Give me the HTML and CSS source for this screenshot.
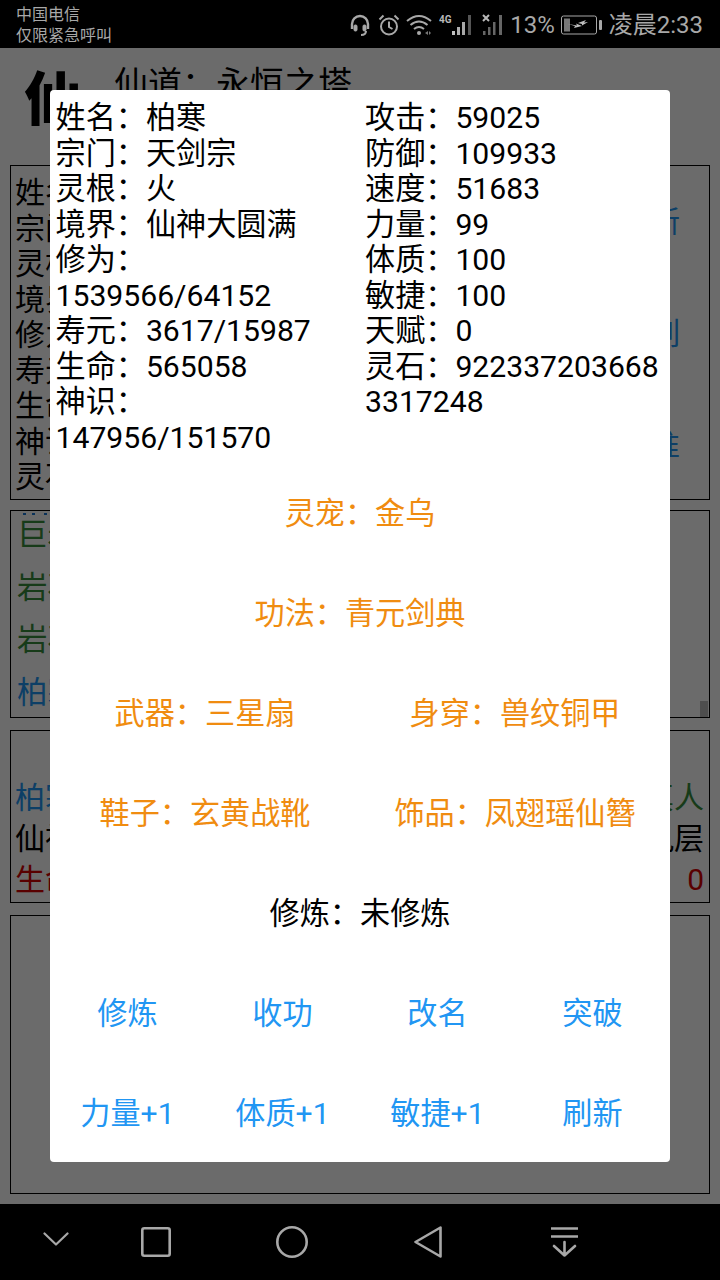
FILE: index.html
```html
<!DOCTYPE html>
<html lang="zh-CN">
<head>
<meta charset="utf-8">
<title>仙道：永恒之塔</title>
<link rel="stylesheet" href="styles.css">
</head>
<body>
<div class="phone">
  <header class="status">
    <div class="carrier"><div>中国电信</div><div>仅限紧急呼叫</div></div>
    <div class="status-right">
      <svg class="i-head" width="20" height="22" viewBox="0 0 20 22" fill="none" stroke="#a8a8a8" stroke-width="2.4"><path d="M2 15V10a8 8 0 0 1 16 0v5"/><rect x="4" y="11" width="3" height="6" rx="1.2" fill="#a8a8a8" stroke-width="1"/><rect x="13" y="11" width="3" height="6" rx="1.2" fill="#a8a8a8" stroke-width="1"/><path d="M16 17q0 4-5 4" stroke-width="2"/></svg>
      <svg class="i-alarm" width="22" height="22" viewBox="0 0 22 22" fill="none" stroke="#a8a8a8" stroke-width="2"><circle cx="11" cy="12.5" r="8"/><path d="M11 7.500v5.500l3.500 2M1.500 5.500l4-4M20.500 5.500l-4-4"/></svg>
      <svg class="i-wifi" width="27" height="22" viewBox="0 0 27 22" fill="none" stroke="#a8a8a8" stroke-width="2"><path d="M1 7q12-10 24 0M4.500 11q8.500-7 17 0M8 15q5-4 10 0"/><circle cx="13" cy="19" r="2" fill="#a8a8a8" stroke="none"/><path d="M19 19l3-2v4zM25 19l-2-2v4z" fill="#777" stroke="none"/></svg>
      <svg class="i-sig" width="36" height="22" viewBox="0 0 36 22"><text x="0" y="9" class="net">4G</text><rect x="13" y="17" width="3" height="4" fill="#c0c0c0"/><rect x="18" y="13" width="3" height="8" fill="#b0b0b0"/><rect x="23" y="8" width="3" height="13" fill="#a8a8a8"/><rect x="29" y="1" width="3" height="20" fill="#555"/></svg>
      <svg class="i-sig2" width="23" height="22" viewBox="0 0 23 22"><path d="M1 1l6 6M7 1L1 7" stroke="#b8b8b8" stroke-width="2"/><rect x="1" y="17" width="2.500" height="4" fill="#666"/><rect x="6" y="13" width="2.500" height="8" fill="#666"/><rect x="11" y="8" width="2.500" height="13" fill="#666"/><rect x="17" y="1" width="3" height="20" fill="#666"/></svg>
      <span class="pct">13%</span>
      <svg class="i-bat" width="41" height="20" viewBox="0 0 41 20" fill="none"><rect x="0.500" y="1" width="35" height="18" rx="2" stroke="#a8a8a8"/><rect x="3" y="3.500" width="6" height="13" fill="#777"/><path d="M7 9l9 1.500-1-2 6 2.500-8 2 1-2zM17 8l8-3-2 2.500 4-.5-6 3.500 0-1.500z" fill="#c0c0c0"/><rect x="38" y="5" width="3" height="10" rx="1" fill="#a8a8a8"/></svg>
      <span class="clock">凌晨2:33</span>
    </div>
  </header>

  <main class="app">
    <div class="head">
      <div class="logo">仙</div>
      <div class="title">仙道：永恒之塔</div>
    </div>

    <section class="box info">
      <div>
        <div>姓名：柏寒</div>
        <div>宗门：天剑宗</div>
        <div>灵根：火</div>
        <div>境界：仙神大圆满</div>
        <div>修为：1539566</div>
        <div>寿元：3617</div>
        <div>生命：565058</div>
        <div>神识：147956</div>
        <div>灵石：9223</div>
      </div>
      <div class="actions">
        <div>刷新</div>
        <div>排列</div>
        <div>标准</div>
      </div>
    </section>

    <section class="box log">
      <div class="dots"></div>
      <div class="log-row green">巨岩兽</div>
      <div class="log-row green">巨岩兽</div>
      <div class="log-row green">岩石怪</div>
      <div class="log-row green">岩石怪</div>
      <div class="log-row blue">柏寒</div>
      <div class="thumb"></div>
    </section>

    <section class="box fight">
      <div class="fight-row"><span class="blue">柏寒</span><span class="green">真人</span></div>
      <div class="fight-row"><span>仙神</span><span>九层</span></div>
      <div class="fight-row red"><span>生命</span><span>0</span></div>
    </section>

    <section class="box empty"></section>

    <div class="scrim">
      <div class="modal">
        <div class="stats">
          <div class="col">
            <div>姓名：柏寒</div>
            <div>宗门：天剑宗</div>
            <div>灵根：火</div>
            <div>境界：仙神大圆满</div>
            <div>修为：</div>
            <div>1539566/64152</div>
            <div>寿元：3617/15987</div>
            <div>生命：565058</div>
            <div>神识：</div>
            <div>147956/151570</div>
          </div>
          <div class="col">
            <div>攻击：59025</div>
            <div>防御：109933</div>
            <div>速度：51683</div>
            <div>力量：99</div>
            <div>体质：100</div>
            <div>敏捷：100</div>
            <div>天赋：0</div>
            <div class="long">灵石：9223372036683317248</div>
          </div>
        </div>
        <div class="row orange"><span>灵宠：金乌</span></div>
        <div class="row orange"><span>功法：青元剑典</span></div>
        <div class="row orange"><span>武器：三星扇</span><span>身穿：兽纹铜甲</span></div>
        <div class="row orange"><span>鞋子：玄黄战靴</span><span>饰品：凤翅瑶仙簪</span></div>
        <div class="row"><span>修炼：未修炼</span></div>
        <div class="row bluebtn"><span>修炼</span><span>收功</span><span>改名</span><span>突破</span></div>
        <div class="row bluebtn"><span>力量+1</span><span>体质+1</span><span>敏捷+1</span><span>刷新</span></div>
      </div>
    </div>
  </main>

  <nav class="nav">
    <svg class="n1" width="26" height="14" viewBox="0 0 26 14" fill="none" stroke="#a8a8a8" stroke-width="2.200" stroke-linecap="round" stroke-linejoin="round"><path d="M1.500 1.500L13 12.500 24.500 1.500"/></svg>
    <svg class="n2" width="30" height="30" viewBox="0 0 30 30" fill="none" stroke="#a8a8a8" stroke-width="2.600"><rect x="1.300" y="1.300" width="27.400" height="27.400" rx="2"/></svg>
    <svg class="n3" width="32" height="32" viewBox="0 0 32 32" fill="none" stroke="#a8a8a8" stroke-width="2.600"><circle cx="16" cy="16" r="14.700"/></svg>
    <svg class="n4" width="28" height="32" viewBox="0 0 28 32" fill="none" stroke="#a8a8a8" stroke-width="2.600" stroke-linejoin="round"><path d="M26.500 1.500V30.500L1.500 16z"/></svg>
    <svg class="n5" width="27" height="30" viewBox="0 0 27 30" fill="none" stroke="#a8a8a8" stroke-width="2.600" stroke-linecap="round" stroke-linejoin="round"><path d="M0 1.500H27M0 9.500H27" stroke-linecap="butt"/><path d="M13.500 15V28.500M3 19l10.500 9.500L24 19"/></svg>
  </nav>
</div>
</body>
</html>
```
FILE: styles.css
```css
* { box-sizing: border-box; }
html, body { margin: 0; padding: 0; }
body {
  width: 720px;
  height: 1280px;
  overflow: hidden;
  background: #000;
  font-family: Roboto, "Noto Sans CJK SC", sans-serif;
  font-size: 30px;
  color: #000;
}
.phone { display: flex; flex-direction: column; height: 1280px; }

.status {
  height: 48px;
  flex: none;
  background: #000;
  color: #a8a8a8;
  display: flex;
  justify-content: space-between;
  align-items: center;
}
.carrier { padding-left: 16px; font-size: 16px; line-height: 21px; margin-top: 1px; }
.status-right { display: flex; align-items: center; padding-right: 17px; padding-top: 2px; }
.status-right svg { display: block; flex: none; }
.i-head { margin-right: 8px; }
.i-alarm { margin-right: 6px; }
.i-wifi { margin-right: 6px; }
.i-sig { margin-right: 7px; }
.i-sig2 { margin-right: 5px; }
.net { font-family: Roboto, sans-serif; font-size: 10px; font-weight: 700; fill: #b8b8b8; }
.pct { font-size: 24px; line-height: 28px; margin-right: 6px; }
.i-bat { margin-right: 7px; }
.clock { font-size: 24px; line-height: 28px; }

.app {
  flex: 1;
  position: relative;
  background: #fff;
  padding: 0 10px;
  overflow: hidden;
}
.head { height: 117px; display: flex; position: relative; }
.logo {
  font-size: 58px;
  font-weight: 900;
  line-height: 58px;
  width: 104px;
  padding: 23px 0 0 14px;
}
.title { font-size: 34px; line-height: 42px; padding-top: 15px; }

.box { border: 1px solid #000; margin-bottom: 10px; position: relative; }
.info {
  height: 335px;
  padding: 9px 29px 0 4px;
  line-height: 35.5px;
  display: flex;
  justify-content: space-between;
}
.actions {
  color: #2196f3;
  line-height: 40px;
  padding-top: 27px;
  display: flex;
  flex-direction: column;
  gap: 72px;
}
.log {
  height: 208px;
  margin-bottom: 12px;
  padding: 0 6px;
  overflow: hidden;
  display: flex;
  flex-direction: column;
  justify-content: flex-end;
}
.log-row { flex: none; height: 52.5px; line-height: 52.5px; position: relative; top: 2px; font-size: 30.5px; }
.dots {
  position: absolute;
  top: 2px;
  left: 12px;
  width: 3px;
  height: 2px;
  background: #1976d2;
  box-shadow: 9px 0 0 #1976d2, 21px 0 0 #1976d2;
}
.thumb {
  position: absolute;
  right: 1px;
  bottom: 0;
  width: 8px;
  height: 16px;
  background: #bbb;
}
.fight { height: 173px; margin-bottom: 12px; padding: 46px 5px 0 4px; }
.fight-row { display: flex; justify-content: space-between; line-height: 41px; }
.empty { height: 279px; margin-bottom: 0; }

.green { color: #388e3c; }
.blue { color: #2196f3; }
.red { color: #d50000; }

.scrim {
  position: absolute;
  inset: 0;
  background: rgba(0, 0, 0, 0.58);
  display: flex;
  align-items: center;
  justify-content: center;
}
.modal {
  width: 620px;
  height: 1072px;
  background: #fff;
  border-radius: 4px;
  padding-top: 10px;
  font-size: 30.15px;
}
.stats { display: flex; height: 361px; line-height: 35.5px; }
.col { width: 309.500px; padding: 0 5px 0 5.500px; }
.long { word-break: break-all; }
.row { height: 100px; display: flex; align-items: center; text-align: center; }
.row span { flex: 1 1 0; }
.orange { color: #f08c10; }
.bluebtn { color: #2196f3; }

.nav {
  height: 76px;
  flex: none;
  background: #000;
  position: relative;
  display: flex;
  align-items: center;
  padding: 0 0 0 43px;
}
.nav svg { display: block; flex: none; }
.n1 { margin-right: 72px; margin-top: -6px; }
.n2 { margin-right: 105px; }
.n3 { margin-right: 106px; }
.n4 { margin-right: 109px; }
```
